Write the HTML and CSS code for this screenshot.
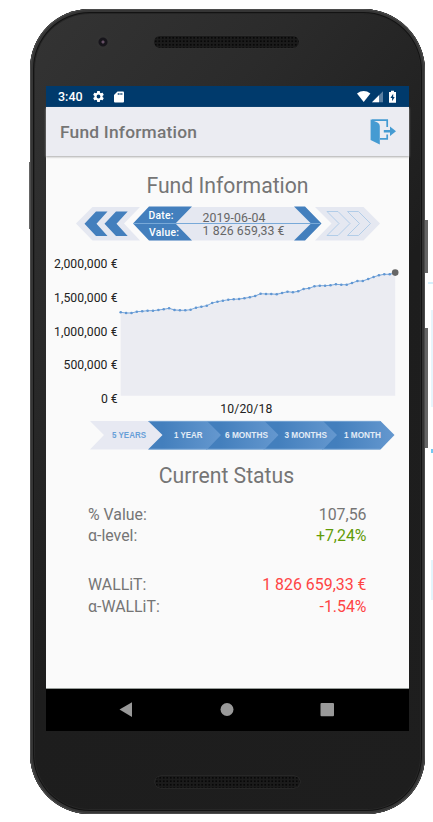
FILE: index.html
```
<!DOCTYPE html>
<html lang="en">
<head>
<meta charset="utf-8">
<title>Fund Information</title>
<link rel="stylesheet" href="styles.css">
</head>
<body>
<div class="phone">
  <i class="key key-left"></i><i class="key key-power"></i><i class="key key-volume"></i>
  <i class="speck speck-a"></i><i class="speck speck-b"></i><i class="speck speck-c"></i><i class="speck speck-d"></i>
  <div class="bezel-top"><span class="camera"></span><span class="speaker"></span></div>
  <div class="screen">
    <div class="status">
      <span class="clock">3:40</span>
      <svg class="gear" viewBox="0 0 24 24"><path fill="#fff" d="M19.4 13a7.500 7.500 0 0 0 0-2l2.100-1.600c.2-.2.300-.4.100-.7l-2-3.400c-.1-.2-.4-.3-.6-.2l-2.500 1a7 7 0 0 0-1.700-1L14.500 2.400c0-.2-.2-.4-.5-.4h-4c-.3 0-.5.2-.5.400L9.100 5.100a7 7 0 0 0-1.700 1l-2.400-1c-.3-.1-.5 0-.7.200l-2 3.400c-.1.300-.1.500.1.700L4.600 11a7.500 7.500 0 0 0 0 2l-2.200 1.600c-.2.200-.2.500-.1.700l2 3.400c.2.200.4.300.7.200l2.400-1a7 7 0 0 0 1.700 1l.4 2.700c0 .2.200.4.500.4h4c.3 0 .5-.2.500-.4l.4-2.700a7 7 0 0 0 1.700-1l2.400 1c.2.100.5 0 .6-.2l2-3.400c.2-.2.100-.5-.1-.7zM12 15.500a3.500 3.500 0 1 1 0-7 3.500 3.500 0 0 1 0 7z"/></svg>
      <svg class="sd" viewBox="0 0 10 12"><path fill="#fff" d="M3.500.5H9q1 0 1 1v9q0 1-1 1H1q-1 0-1-1V4z"/><path fill="#003a6c" d="M3.800 2h.9v2h-.9zM5.600 2h.9v2h-.9zM7.400 2h.9v2h-.9z"/></svg>
      <svg class="signals" viewBox="0 0 42 14"><path fill="#fff" d="M0 3.500Q6.700-1.300 13.400 3.500L6.700 12z"/><path fill="#5c80a2" d="M15 12.300L26 1.300v11z"/><path fill="#fff" d="M15 12.300L22 5.300v7z"/><path fill="#fff" d="M32 2h2V.8h3V2h2v10.700h-7z"/><path fill="#003a6c" d="M36.200 3.800L33.400 8h1.700v3.200L37.700 7h-1.500z"/></svg>
    </div>
    <div class="toolbar">
      <span>Fund Information</span>
      <svg class="exit" viewBox="0 0 26 26"><path fill="none" stroke="#459bd2" stroke-width="1.700" d="M1.500 1.200H17.200V8M17.200 15.500v4.400H10"/><path fill="#459bd2" d="M.6.5L7.500 3.500Q9.800 4.500 9.800 7V25.500L.6 21z"/><path fill="#459bd2" d="M13.800 11H20V7.500L26 12.200 20 17v-3.500h-6.200z"/></svg>
    </div>
    <div class="content">
      <h1>Fund Information</h1>
      <svg class="picker" viewBox="76 206 304 36">
        <path fill="#e5e8f1" d="M76 223.500L92.500 207H140L124 223.500 140 240.500H92.500z"/>
        <path fill="#437fbd" d="M84.500 223.700L96 211.500H107.500L96.500 223.700 107.500 236H96zM104.500 223.700L116 211.500H127.700L116.500 223.700 127.700 236H116z"/>
        <path fill="#e5e8f1" d="M150 207H305L321 223.500 305 240.500H150z"/>
        <path fill="#437fbd" d="M133 223.500L149 206.500H192L175.500 223.500 192 240.500H149zM294 206.500H305L321.500 223.500 305 240.500H294L311 223.500z"/>
        <path stroke="#78a9d8" stroke-width="1" d="M133 223.500H320"/>
        <path fill="#e5e8f1" d="M315 207H363.500L380 223.500 363.500 240.500H315L331.500 223.500z"/>
        <path fill="none" stroke="#acc9e7" stroke-width=".9" d="M327 211.500H338L350 223.500 338 235.500H327L339 223.500zM347.500 211.500H358.500L370.500 223.500 358.500 235.500H347.500L359.500 223.500z"/>
        <g class="picker-label"><text x="148.500" y="218.700" textLength="25">Date:</text><text x="149" y="236" textLength="30">Value:</text></g>
        <g class="picker-value"><text x="202.500" y="222" textLength="63">2019-06-04</text><text x="202.500" y="235" textLength="82">1 826 659,33 €</text></g>
      </svg>
      <svg class="chart" viewBox="46 250 363 168">
        <defs><marker id="dot" markerUnits="userSpaceOnUse" markerWidth="4" markerHeight="4" refX="2" refY="2"><circle cx="2" cy="2" r="1.300" fill="#6197d3"/></marker></defs>
        <path fill="#ebecf2" d="M120.700 395.700V312.300L136.800 312.500 169 308.300 190 310.300 222.900 301.600 260.600 293.700 292.800 291.700 314.300 286.300 346.600 284.600 384.200 274.300 395.200 272.700V395.700z"/>
        <polyline class="series" points="120.7,312.3 126.1,313 131.5,313 136.8,311.7 142.2,311.3 147.6,310.7 153,310.7 158.400,310 163.700,309.300 169.100,308.300 174.500,310 179.900,310.300 185.300,310.300 190.600,309.700 196,307.700 201.400,306.700 206.800,305.700 212.200,303 217.500,301.700 222.900,300.700 228.300,299.700 233.700,299.300 239.100,299 244.400,298.300 249.800,297.300 255.200,296 260.600,293.700 266,294 271.300,294 276.700,294.300 282.100,293 287.500,291.700 292.900,292.300 298.200,291.300 303.600,289 309,288.300 314.400,286.300 319.800,285.700 325.100,285.700 330.500,285.300 335.900,284.300 341.300,284.700 346.700,284.700 352,283 357.400,281 362.800,281 368.200,279 373.600,277 378.900,275.300 384.300,274.300 389.700,274.300 395.100,272.700"/>
        <circle cx="395.200" cy="272.600" r="3.300" fill="#666"/>
        <g class="axis"><text x="117.500" y="268.300" textLength="63.500">2,000,000 €</text><text x="117.500" y="302" textLength="63.500">1,500,000 €</text><text x="117.500" y="335.500" textLength="63.500">1,000,000 €</text><text x="117.500" y="369.300" textLength="54">500,000 €</text><text x="117.500" y="403" textLength="16.500">0 €</text><text x="272.300" y="413.300" textLength="52">10/20/18</text></g>
      </svg>
      <svg class="ranges" viewBox="90 420 305 30">
        <defs><linearGradient id="blue"><stop offset="0" stop-color="#437fbd"/><stop offset=".2" stop-color="#437fbd"/><stop offset="1" stop-color="#6598cf"/></linearGradient></defs>
        <path fill="#e7e9f2" d="M90 421H149L163 435 149 449.500H90L104 435z"/>
        <path fill="url(#blue)" d="M322 421H380.500L394.500 435 380.500 449.500H322z"/>
        <path fill="url(#blue)" d="M263.500 421H323L337 435 323 449.500H263.500z"/>
        <path fill="url(#blue)" d="M206 421H264.500L278.500 435 264.500 449.500H206z"/>
        <path fill="url(#blue)" d="M148 421H207L221 435 207 449.500H148L162.500 435z"/>
        <path stroke="#86afd9" stroke-width=".8" d="M149 421.300H380M149 449.200H380"/>
        <g class="range-label"><text fill="#67a0d8" x="112" y="438.300" textLength="34" lengthAdjust="spacingAndGlyphs">5 YEARS</text><text x="174" y="438.300" textLength="28.500" lengthAdjust="spacingAndGlyphs">1 YEAR</text><text x="225" y="438.300" textLength="43" lengthAdjust="spacingAndGlyphs">6 MONTHS</text><text x="284.500" y="438.300" textLength="42.500" lengthAdjust="spacingAndGlyphs">3 MONTHS</text><text x="344" y="438.300" textLength="37" lengthAdjust="spacingAndGlyphs">1 MONTH</text></g>
      </svg>
      <h1 class="current">Current Status</h1>
      <dl>
        <div><dt>% Value:</dt><dd>107,56</dd></div>
        <div><dt>α-level:</dt><dd class="up">+7,24%</dd></div>
        <div class="gap"><dt>WALLiT:</dt><dd class="down">1 826 659,33 €</dd></div>
        <div><dt>α-WALLiT:</dt><dd class="down">-1.54%</dd></div>
      </dl>
    </div>
    <div class="nav"><svg viewBox="0 0 363 42"><g fill="#999"><path d="M73.500 20.500L86 13.200V28z"/><circle cx="181" cy="20.500" r="6.500"/><rect x="274.500" y="14" width="13.500" height="13.200" rx="1"/></g></svg></div>
  </div>
  <div class="bezel-bottom"><span class="speaker"></span></div>
</div>
</body>
</html>
```
FILE: styles.css
```
* { box-sizing: border-box; }
body { margin: 0; height: 822px; overflow: hidden; background: #fff; font-family: Roboto, "Liberation Sans", sans-serif; color: #757575; }
.phone { position: relative; width: 394.500px; height: 805px; margin: 9px 0 0 30px; padding: 0 15px 0 16px; border-radius: 60px 62px 58px 60px; background: linear-gradient(130deg, #343434 0, #2b2b2b 25%, #1d1d1d 55%, #1e1e1e 100%); box-shadow: inset 0 0 0 1px #4b4b4b, inset 0 0 0 3px #353535, inset 0 0 0 4px #131313, inset 0 0 0 5px #262626; }
.bezel-top { height: 77px; position: relative; }
.bezel-bottom { height: 83px; display: flex; justify-content: center; padding-top: 45px; }
.speaker { display: block; width: 145px; height: 12px; border-radius: 6px; background: radial-gradient(circle, #080808 0.8px, transparent 1.1px) 0 0 / 3.5px 3.5px #1b1b1b; box-shadow: 0 0 0 .5px #303030; }
.bezel-top .speaker { position: absolute; left: 108px; top: 27px; }
.camera { position: absolute; left: 50px; top: 26px; width: 14px; height: 14px; border-radius: 50%; background: radial-gradient(circle, #665066 0 1px, #17151b 2px 4px, #323232 5px); }
.screen { width: 363px; height: 645px; display: flex; flex-direction: column; background: #fafafa; }
.status { height: 21px; flex: none; display: flex; align-items: center; padding: 0 11px 0 12px; background: #003a6c; color: #fff; }
.clock { width: 24.500px; font-size: 12.500px; font-weight: 500; line-height: 21px; white-space: nowrap; }
.gear { width: 13px; height: 13px; margin-left: 9.500px; }
.sd { width: 10px; height: 12px; margin-left: 8.500px; }
.signals { width: 42px; height: 14px; margin-left: auto; margin-right: -0.500px; }
.toolbar { height: 49px; flex: none; display: flex; align-items: center; justify-content: space-between; padding: 0 13px 0 14px; background: #ebecf2; box-shadow: 0 1px 2px #aaa; font-size: 17.400px; font-weight: 500; letter-spacing: .2px; }
.exit { width: 26px; height: 26px; }
.content { height: 533px; flex: none; display: flex; flex-direction: column; border-bottom: 1px solid #989d9a; }
h1 { margin: 16px 0 0; height: 28px; line-height: 28px; font-size: 21.200px; font-weight: 400; text-align: center; }
.picker { width: 304px; height: 36px; margin: 6px 0 8px 30px; flex: none; }
.picker-label { fill: #fff; font-size: 10.300px; font-weight: 500; }
.picker-value { fill: #666; font-size: 12.300px; }
.chart { width: 363px; height: 168px; flex: none; }
.series { fill: none; stroke: #78a7db; stroke-width: 1; marker-start: url(#dot); marker-mid: url(#dot); }
.axis { fill: #222; font-size: 12.200px; text-anchor: end; }
.ranges { width: 305px; height: 30px; margin: 2px 0 0 44px; flex: none; }
.range-label { font-family: "Liberation Sans", sans-serif; font-size: 9px; font-weight: 700; fill: #e3ecf6; }
.current { margin-top: 12px; padding-right: 2px; }
dl { margin: 13.500px 42.500px 0 42px; font-size: 15.900px; line-height: 21.500px; }
dl div { display: flex; justify-content: space-between; height: 21.500px; }
dl .gap { margin-top: 27.500px; }
dd { margin: 0; }
.up { color: #629b08; }
.down { color: #ff4444; }
.nav { height: 42px; background: #000; }
.nav svg { width: 363px; height: 42px; display: block; }
.key, .speck { position: absolute; }
.key { background: #656565; }
.key-left { left: -1px; top: 153px; width: 1px; height: 67px; }
.key-power { left: 395px; top: 211px; width: 3px; height: 53px; }
.key-volume { left: 395px; top: 319px; width: 3px; height: 120px; }
.speck { background: #d5effb; }
.speck-a { left: 398px; top: 273px; width: 5px; height: 2px; }
.speck-b { left: 401px; top: 301px; width: 2px; height: 97px; background: #e7f5fc; }
.speck-c { left: 401px; top: 440px; width: 2px; height: 4px; background: #72c9f2; }
.speck-d { left: 401px; top: 551px; width: 2px; height: 40px; background: #e3f5fc; }
```
